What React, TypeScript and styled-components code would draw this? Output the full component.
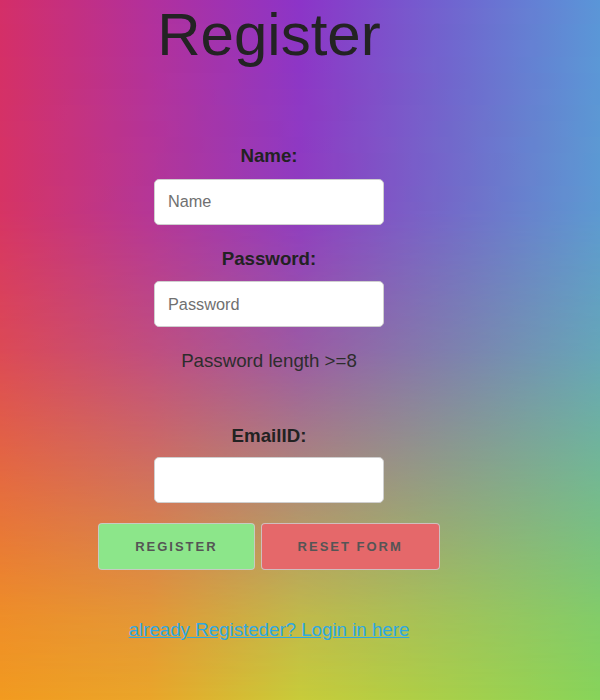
import React from "react";
import styled, { createGlobalStyle } from "styled-components";

const Global = createGlobalStyle`
  html, body { margin: 0; padding: 0; }
  body { font-family: "Liberation Sans", Arial, sans-serif; }
`;

const Page = styled.div`
  position: relative;
  min-height: 700px;
  box-sizing: border-box;
  background: linear-gradient(to right, #f29b20 0%, #eaa62a 25%, #c8cc3a 50%, #a8d04a 75%, #88d45a 100%);
  &::before {
    content: "";
    position: absolute;
    inset: 0;
    background: linear-gradient(to right, #d42e68 0%, #b2309c 25%, #8c34c8 50%, #7064d0 75%, #5a96d8 100%);
    -webkit-mask-image: linear-gradient(to bottom, #000 0%, rgba(0,0,0,0.95) 30%, rgba(0,0,0,0.75) 50%, rgba(0,0,0,0.42) 70%, rgba(0,0,0,0.12) 88%, transparent 100%);
    mask-image: linear-gradient(to bottom, #000 0%, rgba(0,0,0,0.95) 30%, rgba(0,0,0,0.75) 50%, rgba(0,0,0,0.42) 70%, rgba(0,0,0,0.12) 88%, transparent 100%);
  }
`;

const Column = styled.div`
  position: relative;
  z-index: 1;
  width: 538px;
  display: flex;
  flex-direction: column;
  align-items: center;
  text-align: center;
`;

const Title = styled.h1`
  margin: 0;
  font-size: 60px;
  line-height: 69px;
  font-weight: 400;
  color: #232323;
`;

const Form = styled.form`
  display: flex;
  flex-direction: column;
  align-items: center;
  margin-top: 76px;
`;

const Label = styled.label<{ $top: number; $gap: number }>`
  display: block;
  margin-top: ${(p) => p.$top}px;
  margin-bottom: ${(p) => p.$gap}px;
  font-size: 18.72px;
  line-height: 21.5px;
  font-weight: 700;
  color: #222;
`;

const Input = styled.input`
  box-sizing: border-box;
  width: 230px;
  height: 46px;
  padding: 0 13px;
  border: 1px solid #cfcfcf;
  border-radius: 5px;
  background: #fff;
  font-family: "Liberation Sans", Arial, sans-serif;
  font-size: 16.3px;
  color: #222;
  outline: none;
  &::placeholder { color: #707070; }
`;

const Hint = styled.p`
  margin: 23px 0 0;
  font-size: 18.72px;
  line-height: 21.5px;
  color: #2d2d2d;
`;

const Buttons = styled.div`
  display: flex;
  gap: 6px;
  margin-top: 20px;
`;

const Button = styled.button<{ $bg: string }>`
  box-sizing: border-box;
  height: 47px;
  padding: 0 36px;
  border: 1px solid rgba(205, 200, 200, 0.9);
  border-radius: 4px;
  background: ${(p) => p.$bg};
  font-family: "Liberation Sans", Arial, sans-serif;
  font-size: 13px;
  font-weight: 700;
  letter-spacing: 2px;
  text-transform: uppercase;
  color: #555;
  cursor: pointer;
`;

const LoginLink = styled.a`
  margin-top: 49px;
  font-size: 18.72px;
  line-height: 21.5px;
  color: #2ea8e2;
  text-decoration: underline;
`;

export default function App() {
  return (
    <>
      <Global />
      <Page>
        <Column>
          <Title>Register</Title>
          <Form onSubmit={(e) => e.preventDefault()}>
            <Label htmlFor="name" $top={0} $gap={12}>Name:</Label>
            <Input id="name" type="text" placeholder="Name" />
            <Label htmlFor="pw" $top={23} $gap={12}>Password:</Label>
            <Input id="pw" type="password" placeholder="Password" />
            <Hint>Password length &gt;=8</Hint>
            <Label htmlFor="email" $top={53} $gap={11}>EmailID:</Label>
            <Input id="email" type="email" />
            <Buttons>
              <Button type="submit" $bg="#8ce68a">Register</Button>
              <Button type="reset" $bg="#e5686a">Reset Form</Button>
            </Buttons>
            <LoginLink href="#">already Registeder? Login in here</LoginLink>
          </Form>
        </Column>
      </Page>
    </>
  );
}
